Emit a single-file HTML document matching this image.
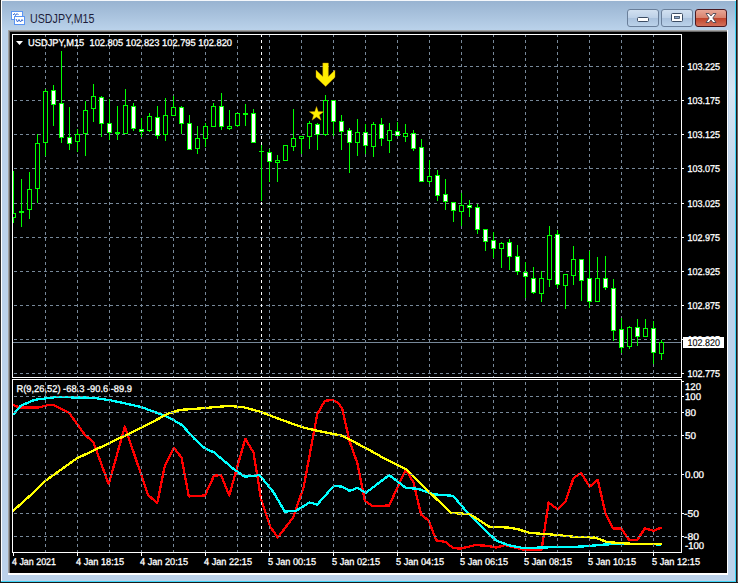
<!DOCTYPE html><html><head><meta charset="utf-8"><style>html,body{margin:0;padding:0;background:#000;overflow:hidden}svg{display:block}</style></head><body>
<svg width="738" height="583" viewBox="0 0 738 583" font-family='"Liberation Sans", sans-serif'>
<defs><linearGradient id="tb" x1="0" y1="0" x2="0" y2="1"><stop offset="0" stop-color="#97b2d0"/><stop offset="1" stop-color="#bad2ea"/></linearGradient><linearGradient id="frm" x1="0" y1="0" x2="0" y2="1"><stop offset="0" stop-color="#a3bcd9"/><stop offset="0.06" stop-color="#b3cbe5"/><stop offset="1" stop-color="#bcd2ea"/></linearGradient><linearGradient id="btn" x1="0" y1="0" x2="0" y2="1"><stop offset="0" stop-color="#d2e1f1"/><stop offset="0.5" stop-color="#bcd0e7"/><stop offset="0.5" stop-color="#a9c1dd"/><stop offset="1" stop-color="#bcd3ea"/></linearGradient><linearGradient id="cls" x1="0" y1="0" x2="0" y2="1"><stop offset="0" stop-color="#e9a99a"/><stop offset="0.5" stop-color="#d8816c"/><stop offset="0.5" stop-color="#c0422a"/><stop offset="1" stop-color="#d4735d"/></linearGradient><linearGradient id="rhl" x1="0" y1="0" x2="0" y2="1"><stop offset="0" stop-color="#bcd2ea"/><stop offset="0.35" stop-color="#d6e4f1"/><stop offset="1" stop-color="#bcd2ea"/></linearGradient></defs>
<rect x="0" y="0" width="738" height="583" fill="#bcd2ea"/>
<rect x="0" y="0" width="738" height="30" fill="url(#tb)"/>
<rect x="0" y="0" width="738" height="1" fill="#f4f7fb"/>
<rect x="0" y="0" width="1" height="583" fill="#2a2a2a"/>
<rect x="1" y="1" width="1" height="582" fill="#ffffff"/>
<rect x="736" y="0" width="1" height="583" fill="#1a1a1a"/>
<rect x="737" y="0" width="1" height="583" fill="#6e6262"/>
<rect x="729" y="30" width="6" height="170" fill="url(#rhl)"/>
<rect x="735" y="1" width="1" height="581" fill="#3fd4f6"/>
<rect x="0" y="582" width="738" height="1" fill="#1a1a1a"/>
<rect x="1" y="581" width="735" height="1" fill="#3fd4f6"/>
<g shape-rendering="crispEdges"><rect x="11.5" y="11.5" width="11" height="8" fill="#fff" stroke="#5b95f2" stroke-width="1"/><rect x="14.5" y="16.5" width="10" height="8" fill="#fff" stroke="#5b95f2" stroke-width="1"/></g><polyline points="16,19 17.5,22 19,19.5 20.5,22 22,19.5 23,21" fill="none" stroke="#3a6fd8" stroke-width="1"/><polyline points="13,15 14.5,13.5 15.5,15.5 17,13.5 18.5,15" fill="none" stroke="#3a6fd8" stroke-width="1"/>
<text x="30" y="23" font-size="12.5" fill="#1c1c3a" textLength="64.5" lengthAdjust="spacingAndGlyphs">USDJPY,M15</text>
<rect x="627.5" y="9.5" width="31" height="17" rx="2.5" fill="url(#btn)" stroke="#6a7f9a"/>
<rect x="637.5" y="17.5" width="11" height="4" rx="1" fill="#fff" stroke="#3c4d64"/>
<rect x="661.5" y="9.5" width="31" height="17" rx="2.5" fill="url(#btn)" stroke="#6a7f9a"/>
<rect x="671.5" y="13.5" width="11" height="8" rx="1" fill="#fff" stroke="#3c4d64"/><rect x="674.5" y="16.5" width="5" height="2" fill="#8aa6c6" stroke="#3c4d64" stroke-width="0.8"/>
<rect x="695.5" y="9.5" width="31" height="17" rx="2.5" fill="url(#cls)" stroke="#4a1a22"/>
<path d="M706,13.5 L709,13.5 L711,16 L713,13.5 L716,13.5 L712.8,18 L716,22.5 L713,22.5 L711,20 L709,22.5 L706,22.5 L709.2,18 Z" fill="#fff" stroke="#3a3a4a" stroke-width="0.8"/>
<rect x="8" y="30" width="720" height="545" fill="#fff"/>
<rect x="8" y="30" width="719" height="2" fill="#a0a0a0"/>
<rect x="8" y="30" width="2" height="543" fill="#a0a0a0"/>
<rect x="9" y="31" width="718" height="1" fill="#696969"/>
<rect x="9" y="31" width="1" height="542" fill="#696969"/>
<rect x="10" y="32" width="717" height="541" fill="#000"/>
<g shape-rendering="crispEdges">
<line x1="13" y1="66.5" x2="680" y2="66.5" stroke="#778899" stroke-width="1" stroke-dasharray="3 3" stroke-dashoffset="-1"/>
<line x1="13" y1="100.5" x2="680" y2="100.5" stroke="#778899" stroke-width="1" stroke-dasharray="3 3" stroke-dashoffset="-1"/>
<line x1="13" y1="134.5" x2="680" y2="134.5" stroke="#778899" stroke-width="1" stroke-dasharray="3 3" stroke-dashoffset="-1"/>
<line x1="13" y1="168.5" x2="680" y2="168.5" stroke="#778899" stroke-width="1" stroke-dasharray="3 3" stroke-dashoffset="-1"/>
<line x1="13" y1="203.5" x2="680" y2="203.5" stroke="#778899" stroke-width="1" stroke-dasharray="3 3" stroke-dashoffset="-1"/>
<line x1="13" y1="237.5" x2="680" y2="237.5" stroke="#778899" stroke-width="1" stroke-dasharray="3 3" stroke-dashoffset="-1"/>
<line x1="13" y1="271.5" x2="680" y2="271.5" stroke="#778899" stroke-width="1" stroke-dasharray="3 3" stroke-dashoffset="-1"/>
<line x1="13" y1="305.5" x2="680" y2="305.5" stroke="#778899" stroke-width="1" stroke-dasharray="3 3" stroke-dashoffset="-1"/>
<line x1="13" y1="339.5" x2="680" y2="339.5" stroke="#778899" stroke-width="1" stroke-dasharray="3 3" stroke-dashoffset="-1"/>
<line x1="13" y1="373.5" x2="680" y2="373.5" stroke="#778899" stroke-width="1" stroke-dasharray="3 3" stroke-dashoffset="-1"/>
<line x1="45.5" y1="34" x2="45.5" y2="377" stroke="#778899" stroke-width="1" stroke-dasharray="3 3"/>
<line x1="77.5" y1="34" x2="77.5" y2="377" stroke="#778899" stroke-width="1" stroke-dasharray="3 3"/>
<line x1="109.5" y1="34" x2="109.5" y2="377" stroke="#778899" stroke-width="1" stroke-dasharray="3 3"/>
<line x1="141.5" y1="34" x2="141.5" y2="377" stroke="#778899" stroke-width="1" stroke-dasharray="3 3"/>
<line x1="173.5" y1="34" x2="173.5" y2="377" stroke="#778899" stroke-width="1" stroke-dasharray="3 3"/>
<line x1="205.5" y1="34" x2="205.5" y2="377" stroke="#778899" stroke-width="1" stroke-dasharray="3 3"/>
<line x1="237.5" y1="34" x2="237.5" y2="377" stroke="#778899" stroke-width="1" stroke-dasharray="3 3"/>
<line x1="269.5" y1="34" x2="269.5" y2="377" stroke="#778899" stroke-width="1" stroke-dasharray="3 3"/>
<line x1="301.5" y1="34" x2="301.5" y2="377" stroke="#778899" stroke-width="1" stroke-dasharray="3 3"/>
<line x1="333.5" y1="34" x2="333.5" y2="377" stroke="#778899" stroke-width="1" stroke-dasharray="3 3"/>
<line x1="365.5" y1="34" x2="365.5" y2="377" stroke="#778899" stroke-width="1" stroke-dasharray="3 3"/>
<line x1="397.5" y1="34" x2="397.5" y2="377" stroke="#778899" stroke-width="1" stroke-dasharray="3 3"/>
<line x1="429.5" y1="34" x2="429.5" y2="377" stroke="#778899" stroke-width="1" stroke-dasharray="3 3"/>
<line x1="461.5" y1="34" x2="461.5" y2="377" stroke="#778899" stroke-width="1" stroke-dasharray="3 3"/>
<line x1="493.5" y1="34" x2="493.5" y2="377" stroke="#778899" stroke-width="1" stroke-dasharray="3 3"/>
<line x1="525.5" y1="34" x2="525.5" y2="377" stroke="#778899" stroke-width="1" stroke-dasharray="3 3"/>
<line x1="557.5" y1="34" x2="557.5" y2="377" stroke="#778899" stroke-width="1" stroke-dasharray="3 3"/>
<line x1="589.5" y1="34" x2="589.5" y2="377" stroke="#778899" stroke-width="1" stroke-dasharray="3 3"/>
<line x1="621.5" y1="34" x2="621.5" y2="377" stroke="#778899" stroke-width="1" stroke-dasharray="3 3"/>
<line x1="653.5" y1="34" x2="653.5" y2="377" stroke="#778899" stroke-width="1" stroke-dasharray="3 3"/>
<line x1="261.5" y1="34" x2="261.5" y2="377" stroke="#ffffff" stroke-width="1" stroke-dasharray="3 3"/>
<rect x="12.5" y="34.5" width="669" height="343" fill="none" stroke="#fff"/>
<rect x="12.5" y="379.5" width="669" height="173" fill="none" stroke="#fff"/>
<line x1="682" y1="66.5" x2="684" y2="66.5" stroke="#fff"/>
<line x1="682" y1="100.5" x2="684" y2="100.5" stroke="#fff"/>
<line x1="682" y1="134.5" x2="684" y2="134.5" stroke="#fff"/>
<line x1="682" y1="168.5" x2="684" y2="168.5" stroke="#fff"/>
<line x1="682" y1="203.5" x2="684" y2="203.5" stroke="#fff"/>
<line x1="682" y1="237.5" x2="684" y2="237.5" stroke="#fff"/>
<line x1="682" y1="271.5" x2="684" y2="271.5" stroke="#fff"/>
<line x1="682" y1="305.5" x2="684" y2="305.5" stroke="#fff"/>
<line x1="682" y1="339.5" x2="684" y2="339.5" stroke="#fff"/>
<line x1="682" y1="373.5" x2="684" y2="373.5" stroke="#fff"/>
<line x1="682" y1="381.5" x2="684" y2="381.5" stroke="#fff"/>
<line x1="682" y1="396.5" x2="684" y2="396.5" stroke="#fff"/>
<line x1="682" y1="412.5" x2="684" y2="412.5" stroke="#fff"/>
<line x1="682" y1="435.5" x2="684" y2="435.5" stroke="#fff"/>
<line x1="682" y1="474.5" x2="684" y2="474.5" stroke="#fff"/>
<line x1="682" y1="513.5" x2="684" y2="513.5" stroke="#fff"/>
<line x1="682" y1="536.5" x2="684" y2="536.5" stroke="#fff"/>
<line x1="13.5" y1="553" x2="13.5" y2="556" stroke="#fff"/>
<line x1="77.5" y1="553" x2="77.5" y2="556" stroke="#fff"/>
<line x1="141.5" y1="553" x2="141.5" y2="556" stroke="#fff"/>
<line x1="205.5" y1="553" x2="205.5" y2="556" stroke="#fff"/>
<line x1="269.5" y1="553" x2="269.5" y2="556" stroke="#fff"/>
<line x1="333.5" y1="553" x2="333.5" y2="556" stroke="#fff"/>
<line x1="397.5" y1="553" x2="397.5" y2="556" stroke="#fff"/>
<line x1="461.5" y1="553" x2="461.5" y2="556" stroke="#fff"/>
<line x1="525.5" y1="553" x2="525.5" y2="556" stroke="#fff"/>
<line x1="589.5" y1="553" x2="589.5" y2="556" stroke="#fff"/>
<line x1="653.5" y1="553" x2="653.5" y2="556" stroke="#fff"/>
<line x1="13" y1="342.5" x2="681" y2="342.5" stroke="#778899"/>
</g>
<g shape-rendering="crispEdges">
<rect x="13" y="171" width="1" height="52" fill="#00ff00"/>
<rect x="13" y="213" width="3" height="5" fill="#00ff00"/>
<rect x="13" y="214" width="2" height="3" fill="#000"/>
<rect x="21" y="179" width="1" height="48" fill="#00ff00"/>
<rect x="19" y="211" width="5" height="2" fill="#00ff00"/>
<rect x="29" y="172" width="1" height="47" fill="#00ff00"/>
<rect x="27" y="189" width="5" height="21" fill="#00ff00"/>
<rect x="28" y="190" width="3" height="19" fill="#000"/>
<rect x="37" y="134" width="1" height="69" fill="#00ff00"/>
<rect x="35" y="143" width="5" height="46" fill="#00ff00"/>
<rect x="36" y="144" width="3" height="44" fill="#000"/>
<rect x="45" y="89" width="1" height="67" fill="#00ff00"/>
<rect x="43" y="91" width="5" height="52" fill="#00ff00"/>
<rect x="44" y="92" width="3" height="50" fill="#000"/>
<rect x="53" y="85" width="1" height="41" fill="#00ff00"/>
<rect x="51" y="90" width="5" height="15" fill="#00ff00"/>
<rect x="52" y="91" width="3" height="13" fill="#fff"/>
<rect x="61" y="51" width="1" height="92" fill="#00ff00"/>
<rect x="59" y="103" width="5" height="35" fill="#00ff00"/>
<rect x="60" y="104" width="3" height="33" fill="#fff"/>
<rect x="69" y="107" width="1" height="43" fill="#00ff00"/>
<rect x="67" y="137" width="5" height="7" fill="#00ff00"/>
<rect x="68" y="138" width="3" height="5" fill="#fff"/>
<rect x="77" y="129" width="1" height="23" fill="#00ff00"/>
<rect x="75" y="134" width="5" height="8" fill="#00ff00"/>
<rect x="76" y="135" width="3" height="6" fill="#000"/>
<rect x="85" y="101" width="1" height="55" fill="#00ff00"/>
<rect x="83" y="110" width="5" height="24" fill="#00ff00"/>
<rect x="84" y="111" width="3" height="22" fill="#000"/>
<rect x="93" y="84" width="1" height="38" fill="#00ff00"/>
<rect x="91" y="96" width="5" height="13" fill="#00ff00"/>
<rect x="92" y="97" width="3" height="11" fill="#000"/>
<rect x="101" y="96" width="1" height="41" fill="#00ff00"/>
<rect x="99" y="97" width="5" height="27" fill="#00ff00"/>
<rect x="100" y="98" width="3" height="25" fill="#fff"/>
<rect x="109" y="99" width="1" height="41" fill="#00ff00"/>
<rect x="107" y="123" width="5" height="10" fill="#00ff00"/>
<rect x="108" y="124" width="3" height="8" fill="#fff"/>
<rect x="117" y="106" width="1" height="34" fill="#00ff00"/>
<rect x="115" y="132" width="5" height="2" fill="#00ff00"/>
<rect x="125" y="89" width="1" height="45" fill="#00ff00"/>
<rect x="123" y="105" width="5" height="29" fill="#00ff00"/>
<rect x="124" y="106" width="3" height="27" fill="#000"/>
<rect x="133" y="103" width="1" height="28" fill="#00ff00"/>
<rect x="131" y="106" width="5" height="23" fill="#00ff00"/>
<rect x="132" y="107" width="3" height="21" fill="#fff"/>
<rect x="141" y="118" width="1" height="19" fill="#00ff00"/>
<rect x="139" y="129" width="5" height="3" fill="#00ff00"/>
<rect x="140" y="130" width="3" height="1" fill="#fff"/>
<rect x="149" y="113" width="1" height="19" fill="#00ff00"/>
<rect x="147" y="116" width="5" height="15" fill="#00ff00"/>
<rect x="148" y="117" width="3" height="13" fill="#000"/>
<rect x="157" y="106" width="1" height="33" fill="#00ff00"/>
<rect x="155" y="117" width="5" height="19" fill="#00ff00"/>
<rect x="156" y="118" width="3" height="17" fill="#fff"/>
<rect x="165" y="98" width="1" height="43" fill="#00ff00"/>
<rect x="163" y="115" width="5" height="20" fill="#00ff00"/>
<rect x="164" y="116" width="3" height="18" fill="#000"/>
<rect x="173" y="96" width="1" height="20" fill="#00ff00"/>
<rect x="171" y="107" width="5" height="9" fill="#00ff00"/>
<rect x="172" y="108" width="3" height="7" fill="#000"/>
<rect x="181" y="106" width="1" height="28" fill="#00ff00"/>
<rect x="179" y="107" width="5" height="17" fill="#00ff00"/>
<rect x="180" y="108" width="3" height="15" fill="#fff"/>
<rect x="189" y="115" width="1" height="34" fill="#00ff00"/>
<rect x="187" y="123" width="5" height="27" fill="#00ff00"/>
<rect x="188" y="124" width="3" height="25" fill="#fff"/>
<rect x="197" y="126" width="1" height="28" fill="#00ff00"/>
<rect x="195" y="138" width="5" height="11" fill="#00ff00"/>
<rect x="196" y="139" width="3" height="9" fill="#000"/>
<rect x="205" y="123" width="1" height="24" fill="#00ff00"/>
<rect x="203" y="126" width="5" height="13" fill="#00ff00"/>
<rect x="204" y="127" width="3" height="11" fill="#000"/>
<rect x="213" y="103" width="1" height="23" fill="#00ff00"/>
<rect x="211" y="106" width="5" height="21" fill="#00ff00"/>
<rect x="212" y="107" width="3" height="19" fill="#000"/>
<rect x="221" y="93" width="1" height="37" fill="#00ff00"/>
<rect x="219" y="106" width="5" height="21" fill="#00ff00"/>
<rect x="220" y="107" width="3" height="19" fill="#fff"/>
<rect x="229" y="110" width="1" height="20" fill="#00ff00"/>
<rect x="227" y="126" width="5" height="3" fill="#00ff00"/>
<rect x="228" y="127" width="3" height="1" fill="#000"/>
<rect x="237" y="113" width="1" height="14" fill="#00ff00"/>
<rect x="235" y="113" width="5" height="13" fill="#00ff00"/>
<rect x="236" y="114" width="3" height="11" fill="#000"/>
<rect x="245" y="104" width="1" height="22" fill="#00ff00"/>
<rect x="243" y="113" width="5" height="2" fill="#00ff00"/>
<rect x="253" y="109" width="1" height="33" fill="#00ff00"/>
<rect x="251" y="113" width="5" height="30" fill="#00ff00"/>
<rect x="252" y="114" width="3" height="28" fill="#fff"/>
<rect x="261" y="145" width="1" height="56" fill="#00ff00"/>
<rect x="259" y="151" width="5" height="1" fill="#00ff00"/>
<rect x="269" y="149" width="1" height="33" fill="#00ff00"/>
<rect x="267" y="152" width="5" height="10" fill="#00ff00"/>
<rect x="268" y="153" width="3" height="8" fill="#fff"/>
<rect x="277" y="155" width="1" height="27" fill="#00ff00"/>
<rect x="275" y="160" width="5" height="3" fill="#00ff00"/>
<rect x="276" y="161" width="3" height="1" fill="#000"/>
<rect x="285" y="145" width="1" height="15" fill="#00ff00"/>
<rect x="283" y="145" width="5" height="16" fill="#00ff00"/>
<rect x="284" y="146" width="3" height="14" fill="#000"/>
<rect x="293" y="109" width="1" height="42" fill="#00ff00"/>
<rect x="291" y="138" width="5" height="9" fill="#00ff00"/>
<rect x="292" y="139" width="3" height="7" fill="#000"/>
<rect x="301" y="136" width="1" height="18" fill="#00ff00"/>
<rect x="299" y="136" width="5" height="3" fill="#00ff00"/>
<rect x="300" y="137" width="3" height="1" fill="#000"/>
<rect x="309" y="121" width="1" height="28" fill="#00ff00"/>
<rect x="307" y="123" width="5" height="14" fill="#00ff00"/>
<rect x="308" y="124" width="3" height="12" fill="#000"/>
<rect x="317" y="123" width="1" height="27" fill="#00ff00"/>
<rect x="315" y="124" width="5" height="11" fill="#00ff00"/>
<rect x="316" y="125" width="3" height="9" fill="#fff"/>
<rect x="325" y="95" width="1" height="41" fill="#00ff00"/>
<rect x="323" y="100" width="5" height="35" fill="#00ff00"/>
<rect x="324" y="101" width="3" height="33" fill="#000"/>
<rect x="333" y="100" width="1" height="36" fill="#00ff00"/>
<rect x="331" y="100" width="5" height="22" fill="#00ff00"/>
<rect x="332" y="101" width="3" height="20" fill="#fff"/>
<rect x="341" y="115" width="1" height="35" fill="#00ff00"/>
<rect x="339" y="121" width="5" height="11" fill="#00ff00"/>
<rect x="340" y="122" width="3" height="9" fill="#fff"/>
<rect x="349" y="128" width="1" height="45" fill="#00ff00"/>
<rect x="347" y="130" width="5" height="13" fill="#00ff00"/>
<rect x="348" y="131" width="3" height="11" fill="#fff"/>
<rect x="357" y="119" width="1" height="37" fill="#00ff00"/>
<rect x="355" y="132" width="5" height="11" fill="#00ff00"/>
<rect x="356" y="133" width="3" height="9" fill="#000"/>
<rect x="365" y="124" width="1" height="30" fill="#00ff00"/>
<rect x="363" y="132" width="5" height="14" fill="#00ff00"/>
<rect x="364" y="133" width="3" height="12" fill="#fff"/>
<rect x="373" y="122" width="1" height="35" fill="#00ff00"/>
<rect x="371" y="124" width="5" height="23" fill="#00ff00"/>
<rect x="372" y="125" width="3" height="21" fill="#000"/>
<rect x="381" y="118" width="1" height="28" fill="#00ff00"/>
<rect x="379" y="124" width="5" height="15" fill="#00ff00"/>
<rect x="380" y="125" width="3" height="13" fill="#fff"/>
<rect x="389" y="123" width="1" height="30" fill="#00ff00"/>
<rect x="387" y="130" width="5" height="11" fill="#00ff00"/>
<rect x="388" y="131" width="3" height="9" fill="#000"/>
<rect x="397" y="122" width="1" height="14" fill="#00ff00"/>
<rect x="395" y="131" width="5" height="5" fill="#00ff00"/>
<rect x="396" y="132" width="3" height="3" fill="#fff"/>
<rect x="405" y="124" width="1" height="18" fill="#00ff00"/>
<rect x="403" y="133" width="5" height="4" fill="#00ff00"/>
<rect x="404" y="134" width="3" height="2" fill="#000"/>
<rect x="413" y="130" width="1" height="21" fill="#00ff00"/>
<rect x="411" y="133" width="5" height="16" fill="#00ff00"/>
<rect x="412" y="134" width="3" height="14" fill="#fff"/>
<rect x="421" y="139" width="1" height="43" fill="#00ff00"/>
<rect x="419" y="147" width="5" height="35" fill="#00ff00"/>
<rect x="420" y="148" width="3" height="33" fill="#fff"/>
<rect x="429" y="160" width="1" height="24" fill="#00ff00"/>
<rect x="427" y="176" width="5" height="6" fill="#00ff00"/>
<rect x="428" y="177" width="3" height="4" fill="#000"/>
<rect x="437" y="170" width="1" height="31" fill="#00ff00"/>
<rect x="435" y="175" width="5" height="21" fill="#00ff00"/>
<rect x="436" y="176" width="3" height="19" fill="#fff"/>
<rect x="445" y="179" width="1" height="31" fill="#00ff00"/>
<rect x="443" y="194" width="5" height="8" fill="#00ff00"/>
<rect x="444" y="195" width="3" height="6" fill="#fff"/>
<rect x="453" y="202" width="1" height="20" fill="#00ff00"/>
<rect x="451" y="202" width="5" height="9" fill="#00ff00"/>
<rect x="452" y="203" width="3" height="7" fill="#fff"/>
<rect x="461" y="193" width="1" height="33" fill="#00ff00"/>
<rect x="459" y="205" width="5" height="7" fill="#00ff00"/>
<rect x="460" y="206" width="3" height="5" fill="#000"/>
<rect x="469" y="200" width="1" height="17" fill="#00ff00"/>
<rect x="467" y="205" width="5" height="3" fill="#00ff00"/>
<rect x="468" y="206" width="3" height="1" fill="#fff"/>
<rect x="477" y="204" width="1" height="30" fill="#00ff00"/>
<rect x="475" y="207" width="5" height="23" fill="#00ff00"/>
<rect x="476" y="208" width="3" height="21" fill="#fff"/>
<rect x="485" y="229" width="1" height="22" fill="#00ff00"/>
<rect x="483" y="229" width="5" height="13" fill="#00ff00"/>
<rect x="484" y="230" width="3" height="11" fill="#fff"/>
<rect x="493" y="232" width="1" height="26" fill="#00ff00"/>
<rect x="491" y="240" width="5" height="9" fill="#00ff00"/>
<rect x="492" y="241" width="3" height="7" fill="#fff"/>
<rect x="501" y="242" width="1" height="26" fill="#00ff00"/>
<rect x="499" y="243" width="5" height="6" fill="#00ff00"/>
<rect x="500" y="244" width="3" height="4" fill="#000"/>
<rect x="509" y="239" width="1" height="31" fill="#00ff00"/>
<rect x="507" y="242" width="5" height="15" fill="#00ff00"/>
<rect x="508" y="243" width="3" height="13" fill="#fff"/>
<rect x="517" y="245" width="1" height="30" fill="#00ff00"/>
<rect x="515" y="256" width="5" height="16" fill="#00ff00"/>
<rect x="516" y="257" width="3" height="14" fill="#fff"/>
<rect x="525" y="262" width="1" height="36" fill="#00ff00"/>
<rect x="523" y="272" width="5" height="5" fill="#00ff00"/>
<rect x="524" y="273" width="3" height="3" fill="#fff"/>
<rect x="533" y="267" width="1" height="27" fill="#00ff00"/>
<rect x="531" y="278" width="5" height="15" fill="#00ff00"/>
<rect x="532" y="279" width="3" height="13" fill="#fff"/>
<rect x="541" y="271" width="1" height="31" fill="#00ff00"/>
<rect x="539" y="278" width="5" height="16" fill="#00ff00"/>
<rect x="540" y="279" width="3" height="14" fill="#000"/>
<rect x="549" y="226" width="1" height="61" fill="#00ff00"/>
<rect x="547" y="235" width="5" height="45" fill="#00ff00"/>
<rect x="548" y="236" width="3" height="43" fill="#000"/>
<rect x="557" y="230" width="1" height="58" fill="#00ff00"/>
<rect x="555" y="234" width="5" height="51" fill="#00ff00"/>
<rect x="556" y="235" width="3" height="49" fill="#fff"/>
<rect x="565" y="274" width="1" height="35" fill="#00ff00"/>
<rect x="563" y="274" width="5" height="12" fill="#00ff00"/>
<rect x="564" y="275" width="3" height="10" fill="#000"/>
<rect x="573" y="246" width="1" height="39" fill="#00ff00"/>
<rect x="571" y="259" width="5" height="17" fill="#00ff00"/>
<rect x="572" y="260" width="3" height="15" fill="#000"/>
<rect x="581" y="259" width="1" height="42" fill="#00ff00"/>
<rect x="579" y="259" width="5" height="22" fill="#00ff00"/>
<rect x="580" y="260" width="3" height="20" fill="#fff"/>
<rect x="589" y="251" width="1" height="57" fill="#00ff00"/>
<rect x="587" y="278" width="5" height="24" fill="#00ff00"/>
<rect x="588" y="279" width="3" height="22" fill="#fff"/>
<rect x="597" y="257" width="1" height="44" fill="#00ff00"/>
<rect x="595" y="278" width="5" height="24" fill="#00ff00"/>
<rect x="596" y="279" width="3" height="22" fill="#000"/>
<rect x="605" y="256" width="1" height="34" fill="#00ff00"/>
<rect x="603" y="278" width="5" height="10" fill="#00ff00"/>
<rect x="604" y="279" width="3" height="8" fill="#fff"/>
<rect x="613" y="279" width="1" height="62" fill="#00ff00"/>
<rect x="611" y="288" width="5" height="43" fill="#00ff00"/>
<rect x="612" y="289" width="3" height="41" fill="#fff"/>
<rect x="621" y="318" width="1" height="35" fill="#00ff00"/>
<rect x="619" y="329" width="5" height="19" fill="#00ff00"/>
<rect x="620" y="330" width="3" height="17" fill="#fff"/>
<rect x="629" y="326" width="1" height="23" fill="#00ff00"/>
<rect x="627" y="327" width="5" height="20" fill="#00ff00"/>
<rect x="628" y="328" width="3" height="18" fill="#000"/>
<rect x="637" y="319" width="1" height="27" fill="#00ff00"/>
<rect x="635" y="327" width="5" height="10" fill="#00ff00"/>
<rect x="636" y="328" width="3" height="8" fill="#fff"/>
<rect x="645" y="319" width="1" height="17" fill="#00ff00"/>
<rect x="643" y="328" width="5" height="9" fill="#00ff00"/>
<rect x="644" y="329" width="3" height="7" fill="#000"/>
<rect x="653" y="321" width="1" height="43" fill="#00ff00"/>
<rect x="651" y="328" width="5" height="25" fill="#00ff00"/>
<rect x="652" y="329" width="3" height="23" fill="#fff"/>
<rect x="661" y="340" width="1" height="20" fill="#00ff00"/>
<rect x="659" y="342" width="5" height="12" fill="#00ff00"/>
<rect x="660" y="343" width="3" height="10" fill="#000"/>
</g>
<svg x="13" y="380" width="668" height="172" viewBox="13 380 668 172" overflow="hidden">
<polyline points="13.0,404.7 19.1,407.4 38.8,407.4 49.5,404.7 54.0,405.3 69.2,412.9 84.4,434.2 93.5,442.4 108.7,484.3 124.8,426.6 148.1,494.9 157.2,503.1 164.8,466.0 173.9,447.8 181.5,457.5 188.8,496.4 204.9,495.5 214.0,475.8 221.0,475.1 229.2,495.5 245.3,438.7 253.5,452.4 261.1,499.4 270.2,526.8 277.8,537.4 293.0,517.7 303.6,487.3 317.2,414.4 324.8,400.8 332.4,399.9 337.6,402.3 342.1,408.4 349.7,441.8 357.3,463.0 364.9,501.0 372.5,506.1 389.2,505.5 405.9,469.1 413.5,482.7 421.1,514.6 428.7,520.7 436.3,540.4 445.4,541.9 453.0,548.0 460.5,548.6 475.7,545.0 487.9,545.9 496.1,547.5 505.2,545.1 512.8,546.9 523.4,549.6 541.6,549.6 548.6,502.5 557.4,509.2 565.3,501.9 573.5,478.2 581.1,472.8 589.6,486.7 597.8,479.8 605.4,513.2 613.0,528.4 621.2,528.4 629.1,539.9 637.3,539.9 644.9,528.4 653.4,530.8 661.6,527.5" fill="none" stroke="#ff0000" stroke-width="2.3" stroke-linejoin="round" shape-rendering="crispEdges"/>
<polyline points="13.0,415.0 20.6,405.9 34.3,399.9 55.5,397.1 92.0,397.7 110.2,400.2 140.5,406.8 158.8,413.5 170.0,418.1 182.1,425.1 194.3,438.7 204.9,448.4 214.0,452.4 233.8,469.1 244.4,476.7 259.6,475.1 273.2,491.8 284.8,511.6 296.0,510.7 309.6,502.5 317.2,504.6 333.9,485.8 342.1,486.7 349.7,490.9 357.3,487.9 365.8,492.8 389.2,475.1 405.9,487.9 418.0,488.8 433.2,494.3 453.0,495.8 466.6,511.6 481.8,526.8 496.1,540.5 508.2,545.1 523.4,548.1 541.6,547.5 581.1,546.6 605.4,544.5 626.7,543.6 661.0,544.5" fill="none" stroke="#00ffff" stroke-width="2.3" stroke-linejoin="round" shape-rendering="crispEdges"/>
<polyline points="13.0,511.0 34.3,491.8 44.9,481.2 76.8,458.4 110.2,442.7 143.6,426.6 167.9,413.8 180.0,409.9 200.4,408.4 229.2,405.9 244.4,407.4 261.1,412.0 279.3,419.0 302.1,427.2 318.8,431.1 342.1,435.7 366.4,448.4 381.6,456.9 405.9,469.1 421.1,484.3 451.4,513.1 469.6,514.0 489.4,526.8 508.2,527.5 517.3,529.0 529.5,532.9 550.8,534.4 575.1,536.9 594.8,537.5 607.0,542.0 626.7,543.6 661.6,544.2" fill="none" stroke="#ffff00" stroke-width="2.3" stroke-linejoin="round" shape-rendering="crispEdges"/>
</svg>
<g shape-rendering="crispEdges">
<line x1="13" y1="396.5" x2="680" y2="396.5" stroke="#778899" stroke-width="1" stroke-dasharray="3 3" stroke-dashoffset="-1"/>
<line x1="13" y1="412.5" x2="680" y2="412.5" stroke="#778899" stroke-width="1" stroke-dasharray="3 3" stroke-dashoffset="-1"/>
<line x1="13" y1="435.5" x2="680" y2="435.5" stroke="#778899" stroke-width="1" stroke-dasharray="3 3" stroke-dashoffset="-1"/>
<line x1="13" y1="474.5" x2="680" y2="474.5" stroke="#778899" stroke-width="1" stroke-dasharray="3 3" stroke-dashoffset="-1"/>
<line x1="13" y1="513.5" x2="680" y2="513.5" stroke="#778899" stroke-width="1" stroke-dasharray="3 3" stroke-dashoffset="-1"/>
<line x1="13" y1="536.5" x2="680" y2="536.5" stroke="#778899" stroke-width="1" stroke-dasharray="3 3" stroke-dashoffset="-1"/>
<line x1="45.5" y1="382" x2="45.5" y2="552" stroke="#778899" stroke-width="1" stroke-dasharray="3 3"/>
<line x1="77.5" y1="382" x2="77.5" y2="552" stroke="#778899" stroke-width="1" stroke-dasharray="3 3"/>
<line x1="109.5" y1="382" x2="109.5" y2="552" stroke="#778899" stroke-width="1" stroke-dasharray="3 3"/>
<line x1="141.5" y1="382" x2="141.5" y2="552" stroke="#778899" stroke-width="1" stroke-dasharray="3 3"/>
<line x1="173.5" y1="382" x2="173.5" y2="552" stroke="#778899" stroke-width="1" stroke-dasharray="3 3"/>
<line x1="205.5" y1="382" x2="205.5" y2="552" stroke="#778899" stroke-width="1" stroke-dasharray="3 3"/>
<line x1="237.5" y1="382" x2="237.5" y2="552" stroke="#778899" stroke-width="1" stroke-dasharray="3 3"/>
<line x1="269.5" y1="382" x2="269.5" y2="552" stroke="#778899" stroke-width="1" stroke-dasharray="3 3"/>
<line x1="301.5" y1="382" x2="301.5" y2="552" stroke="#778899" stroke-width="1" stroke-dasharray="3 3"/>
<line x1="333.5" y1="382" x2="333.5" y2="552" stroke="#778899" stroke-width="1" stroke-dasharray="3 3"/>
<line x1="365.5" y1="382" x2="365.5" y2="552" stroke="#778899" stroke-width="1" stroke-dasharray="3 3"/>
<line x1="397.5" y1="382" x2="397.5" y2="552" stroke="#778899" stroke-width="1" stroke-dasharray="3 3"/>
<line x1="429.5" y1="382" x2="429.5" y2="552" stroke="#778899" stroke-width="1" stroke-dasharray="3 3"/>
<line x1="461.5" y1="382" x2="461.5" y2="552" stroke="#778899" stroke-width="1" stroke-dasharray="3 3"/>
<line x1="493.5" y1="382" x2="493.5" y2="552" stroke="#778899" stroke-width="1" stroke-dasharray="3 3"/>
<line x1="525.5" y1="382" x2="525.5" y2="552" stroke="#778899" stroke-width="1" stroke-dasharray="3 3"/>
<line x1="557.5" y1="382" x2="557.5" y2="552" stroke="#778899" stroke-width="1" stroke-dasharray="3 3"/>
<line x1="589.5" y1="382" x2="589.5" y2="552" stroke="#778899" stroke-width="1" stroke-dasharray="3 3"/>
<line x1="621.5" y1="382" x2="621.5" y2="552" stroke="#778899" stroke-width="1" stroke-dasharray="3 3"/>
<line x1="653.5" y1="382" x2="653.5" y2="552" stroke="#778899" stroke-width="1" stroke-dasharray="3 3"/>
<line x1="261.5" y1="382" x2="261.5" y2="552" stroke="#ffffff" stroke-width="1" stroke-dasharray="3 3"/>
</g>
<path d="M322.8,63 L328.4,63 L328.4,76.5 L335,70 L335,77.3 L325.6,86.5 L316,77.3 L316,70 L322.8,76.5 Z" fill="#ffee00" stroke="#c08800" stroke-width="0.4"/>
<polygon points="316.50,106.40 318.26,111.57 323.73,111.65 319.35,114.93 320.97,120.15 316.50,117.00 312.03,120.15 313.65,114.93 309.27,111.65 314.74,111.57" fill="#ffee00" stroke="#c08800" stroke-width="0.4"/>
<path d="M16,41 L23,41 L19.5,45 Z" fill="#fff"/>
<text text-rendering="geometricPrecision" transform="translate(28,46) scale(1,1)" x="0" y="0" font-size="9.8" fill="#fff" stroke="#fff" stroke-width="0.3" textLength="204" lengthAdjust="spacingAndGlyphs" text-anchor="start">USDJPY,M15&#160;&#160;102.805 102.823 102.795 102.820</text>
<text text-rendering="geometricPrecision" transform="translate(687.5,70) scale(1,1)" x="0" y="0" font-size="9.8" fill="#fff" stroke="#fff" stroke-width="0.3" textLength="32.5" lengthAdjust="spacingAndGlyphs" text-anchor="start">103.225</text>
<text text-rendering="geometricPrecision" transform="translate(687.5,104) scale(1,1)" x="0" y="0" font-size="9.8" fill="#fff" stroke="#fff" stroke-width="0.3" textLength="32.5" lengthAdjust="spacingAndGlyphs" text-anchor="start">103.175</text>
<text text-rendering="geometricPrecision" transform="translate(687.5,138) scale(1,1)" x="0" y="0" font-size="9.8" fill="#fff" stroke="#fff" stroke-width="0.3" textLength="32.5" lengthAdjust="spacingAndGlyphs" text-anchor="start">103.125</text>
<text text-rendering="geometricPrecision" transform="translate(687.5,172) scale(1,1)" x="0" y="0" font-size="9.8" fill="#fff" stroke="#fff" stroke-width="0.3" textLength="32.5" lengthAdjust="spacingAndGlyphs" text-anchor="start">103.075</text>
<text text-rendering="geometricPrecision" transform="translate(687.5,207) scale(1,1)" x="0" y="0" font-size="9.8" fill="#fff" stroke="#fff" stroke-width="0.3" textLength="32.5" lengthAdjust="spacingAndGlyphs" text-anchor="start">103.025</text>
<text text-rendering="geometricPrecision" transform="translate(687.5,241) scale(1,1)" x="0" y="0" font-size="9.8" fill="#fff" stroke="#fff" stroke-width="0.3" textLength="32.5" lengthAdjust="spacingAndGlyphs" text-anchor="start">102.975</text>
<text text-rendering="geometricPrecision" transform="translate(687.5,275) scale(1,1)" x="0" y="0" font-size="9.8" fill="#fff" stroke="#fff" stroke-width="0.3" textLength="32.5" lengthAdjust="spacingAndGlyphs" text-anchor="start">102.925</text>
<text text-rendering="geometricPrecision" transform="translate(687.5,309) scale(1,1)" x="0" y="0" font-size="9.8" fill="#fff" stroke="#fff" stroke-width="0.3" textLength="32.5" lengthAdjust="spacingAndGlyphs" text-anchor="start">102.875</text>
<text text-rendering="geometricPrecision" transform="translate(687.5,343) scale(1,1)" x="0" y="0" font-size="9.8" fill="#fff" stroke="#fff" stroke-width="0.3" textLength="32.5" lengthAdjust="spacingAndGlyphs" text-anchor="start">102.825</text>
<text text-rendering="geometricPrecision" transform="translate(687.5,377) scale(1,1)" x="0" y="0" font-size="9.8" fill="#fff" stroke="#fff" stroke-width="0.3" textLength="32.5" lengthAdjust="spacingAndGlyphs" text-anchor="start">102.775</text>
<rect x="683" y="337" width="41" height="11" fill="#fff"/>
<text text-rendering="geometricPrecision" transform="translate(687.5,345.5) scale(1,1)" x="0" y="0" font-size="9.8" fill="#000" stroke="#000" stroke-width="0.1" textLength="32.5" lengthAdjust="spacingAndGlyphs" text-anchor="start">102.820</text>
<text text-rendering="geometricPrecision" transform="translate(16.5,392) scale(1,1)" x="0" y="0" font-size="9.8" fill="#fff" stroke="#fff" stroke-width="0.3" textLength="115.5" lengthAdjust="spacingAndGlyphs" text-anchor="start">R(9,26,52) -68.3 -90.6 -89.9</text>
<text text-rendering="geometricPrecision" transform="translate(685,389.8) scale(1,1)" x="0" y="0" font-size="9.8" fill="#fff" stroke="#fff" stroke-width="0.3" textLength="16" lengthAdjust="spacingAndGlyphs" text-anchor="start">120</text>
<text text-rendering="geometricPrecision" transform="translate(685,399.7) scale(1,1)" x="0" y="0" font-size="9.8" fill="#fff" stroke="#fff" stroke-width="0.3" textLength="16" lengthAdjust="spacingAndGlyphs" text-anchor="start">100</text>
<text text-rendering="geometricPrecision" transform="translate(685,415.7) scale(1,1)" x="0" y="0" font-size="9.8" fill="#fff" stroke="#fff" stroke-width="0.3" textLength="11" lengthAdjust="spacingAndGlyphs" text-anchor="start">80</text>
<text text-rendering="geometricPrecision" transform="translate(685,438.5) scale(1,1)" x="0" y="0" font-size="9.8" fill="#fff" stroke="#fff" stroke-width="0.3" textLength="11" lengthAdjust="spacingAndGlyphs" text-anchor="start">50</text>
<text text-rendering="geometricPrecision" transform="translate(685,478.2) scale(1,1)" x="0" y="0" font-size="9.8" fill="#fff" stroke="#fff" stroke-width="0.3" textLength="19" lengthAdjust="spacingAndGlyphs" text-anchor="start">0.00</text>
<text text-rendering="geometricPrecision" transform="translate(684,516.5) scale(1,1)" x="0" y="0" font-size="9.8" fill="#fff" stroke="#fff" stroke-width="0.3" textLength="15" lengthAdjust="spacingAndGlyphs" text-anchor="start">-50</text>
<text text-rendering="geometricPrecision" transform="translate(684,540) scale(1,1)" x="0" y="0" font-size="9.8" fill="#fff" stroke="#fff" stroke-width="0.3" textLength="15" lengthAdjust="spacingAndGlyphs" text-anchor="start">-80</text>
<text text-rendering="geometricPrecision" transform="translate(685,549.2) scale(1,1)" x="0" y="0" font-size="9.8" fill="#fff" stroke="#fff" stroke-width="0.3" textLength="19" lengthAdjust="spacingAndGlyphs" text-anchor="start">-100</text>
<text text-rendering="geometricPrecision" transform="translate(12,565) scale(1,1)" x="0" y="0" font-size="9.8" fill="#fff" stroke="#fff" stroke-width="0.3" textLength="44" lengthAdjust="spacingAndGlyphs" text-anchor="start">4 Jan 2021</text>
<text text-rendering="geometricPrecision" transform="translate(76,565) scale(1,1)" x="0" y="0" font-size="9.8" fill="#fff" stroke="#fff" stroke-width="0.3" textLength="48" lengthAdjust="spacingAndGlyphs" text-anchor="start">4 Jan 18:15</text>
<text text-rendering="geometricPrecision" transform="translate(140,565) scale(1,1)" x="0" y="0" font-size="9.8" fill="#fff" stroke="#fff" stroke-width="0.3" textLength="48" lengthAdjust="spacingAndGlyphs" text-anchor="start">4 Jan 20:15</text>
<text text-rendering="geometricPrecision" transform="translate(204,565) scale(1,1)" x="0" y="0" font-size="9.8" fill="#fff" stroke="#fff" stroke-width="0.3" textLength="48" lengthAdjust="spacingAndGlyphs" text-anchor="start">4 Jan 22:15</text>
<text text-rendering="geometricPrecision" transform="translate(268,565) scale(1,1)" x="0" y="0" font-size="9.8" fill="#fff" stroke="#fff" stroke-width="0.3" textLength="48" lengthAdjust="spacingAndGlyphs" text-anchor="start">5 Jan 00:15</text>
<text text-rendering="geometricPrecision" transform="translate(332,565) scale(1,1)" x="0" y="0" font-size="9.8" fill="#fff" stroke="#fff" stroke-width="0.3" textLength="48" lengthAdjust="spacingAndGlyphs" text-anchor="start">5 Jan 02:15</text>
<text text-rendering="geometricPrecision" transform="translate(396,565) scale(1,1)" x="0" y="0" font-size="9.8" fill="#fff" stroke="#fff" stroke-width="0.3" textLength="48" lengthAdjust="spacingAndGlyphs" text-anchor="start">5 Jan 04:15</text>
<text text-rendering="geometricPrecision" transform="translate(460,565) scale(1,1)" x="0" y="0" font-size="9.8" fill="#fff" stroke="#fff" stroke-width="0.3" textLength="48" lengthAdjust="spacingAndGlyphs" text-anchor="start">5 Jan 06:15</text>
<text text-rendering="geometricPrecision" transform="translate(524,565) scale(1,1)" x="0" y="0" font-size="9.8" fill="#fff" stroke="#fff" stroke-width="0.3" textLength="48" lengthAdjust="spacingAndGlyphs" text-anchor="start">5 Jan 08:15</text>
<text text-rendering="geometricPrecision" transform="translate(588,565) scale(1,1)" x="0" y="0" font-size="9.8" fill="#fff" stroke="#fff" stroke-width="0.3" textLength="48" lengthAdjust="spacingAndGlyphs" text-anchor="start">5 Jan 10:15</text>
<text text-rendering="geometricPrecision" transform="translate(652,565) scale(1,1)" x="0" y="0" font-size="9.8" fill="#fff" stroke="#fff" stroke-width="0.3" textLength="48" lengthAdjust="spacingAndGlyphs" text-anchor="start">5 Jan 12:15</text>
</svg></body></html>
